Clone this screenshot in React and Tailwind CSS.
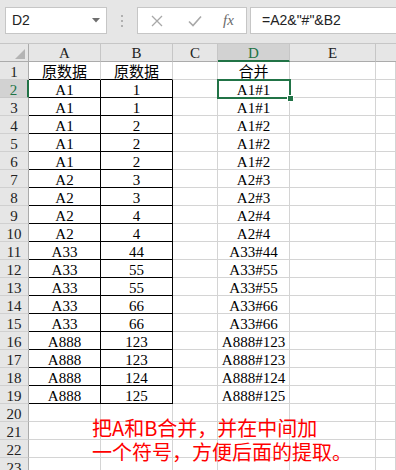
import React from "react";

const data = [
  ["A1", "1", "A1#1"],
  ["A1", "1", "A1#1"],
  ["A1", "2", "A1#2"],
  ["A1", "2", "A1#2"],
  ["A1", "2", "A1#2"],
  ["A2", "3", "A2#3"],
  ["A2", "3", "A2#3"],
  ["A2", "4", "A2#4"],
  ["A2", "4", "A2#4"],
  ["A33", "44", "A33#44"],
  ["A33", "55", "A33#55"],
  ["A33", "55", "A33#55"],
  ["A33", "66", "A33#66"],
  ["A33", "66", "A33#66"],
  ["A888", "123", "A888#123"],
  ["A888", "123", "A888#123"],
  ["A888", "124", "A888#124"],
  ["A888", "125", "A888#125"],
];

const cellFont = { fontFamily: '"Liberation Serif", "Noto Sans CJK SC", serif' };

function RowHead({ n, selected }) {
  return selected ? (
    <div className="h-[18px] border-b border-[#c8c8c8] border-r-2 border-r-[#217346] bg-[#d2d2d2] text-[#217346] text-center text-[15px] leading-[15px] pt-[3px]">
      {n}
    </div>
  ) : (
    <div className="h-[18px] border-b border-[#d0d0d0] border-r border-r-[#ababab] bg-[#e6e6e6] text-[#222] text-center text-[15px] leading-[15px] pt-[3px]">
      {n}
    </div>
  );
}

function Cell({ children, black, blackBottom }) {
  const r = black ? "border-r-black" : "border-r-[#d4d4d4]";
  const b = black || blackBottom ? "border-b-black" : "border-b-[#d4d4d4]";
  return (
    <div
      className={`h-[18px] border-r border-b ${r} ${b} text-center text-[15px] leading-[15px] pt-[3px] text-black whitespace-nowrap`}
    >
      {children}
    </div>
  );
}

export default function App() {
  const rows = [];
  rows.push(
    <React.Fragment key="r1">
      <RowHead n={1} />
      <Cell blackBottom>原数据</Cell>
      <Cell blackBottom>原数据</Cell>
      <Cell />
      <Cell>合并</Cell>
      <Cell />
      <Cell />
    </React.Fragment>
  );
  data.forEach((d, i) => {
    const n = i + 2;
    rows.push(
      <React.Fragment key={"r" + n}>
        <RowHead n={n} selected={n === 2} />
        <Cell black>{d[0]}</Cell>
        <Cell black>{d[1]}</Cell>
        <Cell />
        {n === 2 ? (
          <div className="relative h-[18px] border-r border-b border-[#d4d4d4] text-center text-[15px] leading-[15px] pt-[3px] text-black">
            {d[2]}
            <div className="absolute left-[-1px] top-[-1px] w-[74px] h-[20px] border-2 border-[#217346]" />
            <div className="absolute left-[69px] top-[15px] w-[7px] h-[7px] bg-[#217346] border border-white" />
          </div>
        ) : (
          <Cell>{d[2]}</Cell>
        )}
        <Cell />
        <Cell />
      </React.Fragment>
    );
  });
  for (let n = 20; n <= 23; n++) {
    rows.push(
      <React.Fragment key={"r" + n}>
        <RowHead n={n} />
        <Cell />
        <Cell />
        <Cell />
        <Cell />
        <Cell />
        <Cell />
      </React.Fragment>
    );
  }

  return (
    <div className="relative w-[396px] h-[470px] overflow-hidden bg-white">
      <div
        className="h-[44px] bg-[#e6e6e6] border-b border-[#c6c6c6] flex items-start pt-[7px]"
        style={{ fontFamily: '"Liberation Sans", Arial, sans-serif' }}
      >
        <div className="ml-[5px] w-[102px] h-[27px] bg-white border border-[#c6c6c6] flex items-center justify-between pl-[6px] pr-[6px]">
          <span className="text-[14px] text-[#222]">D2</span>
          <svg width="8" height="5" viewBox="0 0 8 5">
            <path d="M0 0 L8 0 L4 4.5 Z" fill="#6e6e6e" />
          </svg>
        </div>
        <div className="w-[30px] h-[27px] flex flex-col items-center justify-center gap-[3px]">
          <div className="w-[2px] h-[2px] bg-[#b0b0b0]" />
          <div className="w-[2px] h-[2px] bg-[#b0b0b0]" />
          <div className="w-[2px] h-[2px] bg-[#b0b0b0]" />
        </div>
        <div className="w-[110px] h-[27px] bg-white border border-[#c6c6c6] flex items-center">
          <svg className="ml-[13px]" width="12" height="12" viewBox="0 0 12 12">
            <path d="M1 1 L11 11 M11 1 L1 11" stroke="#a8a8a8" strokeWidth="1.3" fill="none" />
          </svg>
          <svg className="ml-[25px]" width="14" height="12" viewBox="0 0 14 12">
            <path d="M1 6.5 L5 10.5 L13 1.5" stroke="#a8a8a8" strokeWidth="1.6" fill="none" />
          </svg>
          <span
            className="ml-[21px] italic text-[15px] text-[#6a6a6a]"
            style={{ fontFamily: '"Liberation Serif", serif' }}
          >
            fx
          </span>
        </div>
        <div className="ml-[3px] flex-1 h-[27px] bg-white border border-r-0 border-[#c6c6c6] flex items-center pl-[11px]">
          <span className="text-[14px] text-[#222]">=A2&amp;"#"&amp;B2</span>
        </div>
      </div>

      <div className="grid grid-cols-[29px_72px_72px_45px_72px_86px_1fr]" style={cellFont}>
        <div className="relative h-[18px] bg-[#e6e6e6] border-r border-b border-[#ababab]">
          <svg className="absolute right-[3px] bottom-[2px]" width="10" height="10" viewBox="0 0 10 10">
            <path d="M10 0 L10 10 L0 10 Z" fill="#b4b4b4" />
          </svg>
        </div>
        {["A", "B", "C"].map((c) => (
          <div
            key={c}
            className="h-[18px] bg-[#e6e6e6] border-r border-r-[#c6c6c6] border-b border-b-[#ababab] text-center text-[15px] leading-[15px] pt-[2px] text-[#222]"
          >
            {c}
          </div>
        ))}
        <div className="h-[18px] bg-[#d2d2d2] border-r border-r-[#c6c6c6] border-b-2 border-b-[#217346] text-center text-[15px] leading-[15px] pt-[2px] text-[#217346]">
          D
        </div>
        <div className="h-[18px] bg-[#e6e6e6] border-r border-r-[#c6c6c6] border-b border-b-[#ababab] text-center text-[15px] leading-[15px] pt-[2px] text-[#222]">
          E
        </div>
        <div className="h-[18px] bg-[#e6e6e6] border-b border-b-[#ababab]" />
        {rows}
      </div>

      <div
        className="absolute left-[92px] top-[416px] text-[20px] leading-[24px] text-[#ff0000] whitespace-nowrap"
        style={{ fontFamily: '"Noto Sans CJK SC", sans-serif' }}
      >
        <div>把A和B合并，并在中间加</div>
        <div>一个符号，方便后面的提取。</div>
      </div>
    </div>
  );
}
